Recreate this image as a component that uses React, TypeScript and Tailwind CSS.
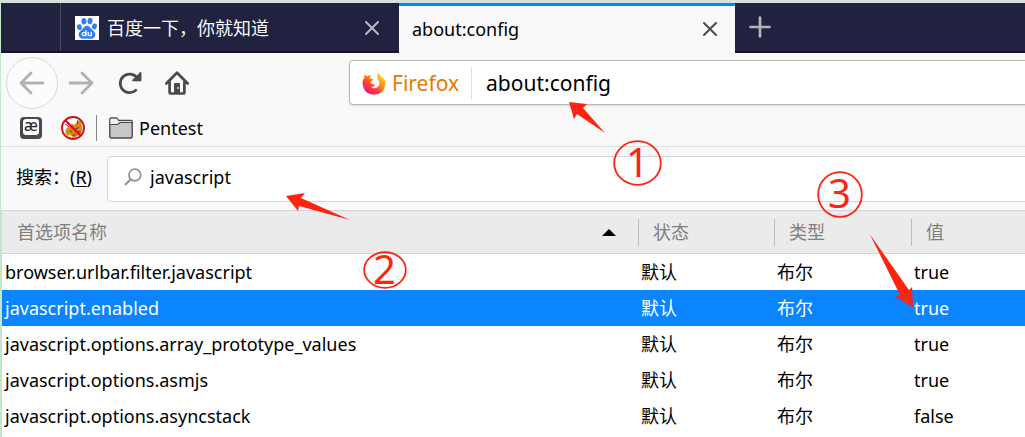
import { useState } from "react";

type Pref = { name: string; status: string; type: string; value: string };

const prefs: Pref[] = [
  { name: "browser.urlbar.filter.javascript", status: "默认", type: "布尔", value: "true" },
  { name: "javascript.enabled", status: "默认", type: "布尔", value: "true" },
  { name: "javascript.options.array_prototype_values", status: "默认", type: "布尔", value: "true" },
  { name: "javascript.options.asmjs", status: "默认", type: "布尔", value: "true" },
  { name: "javascript.options.asyncstack", status: "默认", type: "布尔", value: "false" },
];

function CloseIcon() {
  return (
    <svg viewBox="0 0 16 16" className="size-4" fill="none" stroke="currentColor" strokeWidth="2" strokeLinecap="round" aria-hidden="true">
      <path d="M2 2l12 12M14 2L2 14" />
    </svg>
  );
}

function BaiduIcon() {
  return (
    <svg viewBox="0 0 24 24" className="size-6 shrink-0" aria-hidden="true">
      <rect width="24" height="24" fill="#fff" />
      <g fill="#2d7ff5">
        <ellipse cx="4.4" cy="11.200" rx="2.400" ry="2.900" transform="rotate(-12 4.4 11.200)" />
        <ellipse cx="8.900" cy="5.200" rx="2.500" ry="3.200" />
        <ellipse cx="15" cy="5" rx="2.500" ry="3.200" transform="rotate(10 15 5)" />
        <ellipse cx="19.400" cy="10.400" rx="2.500" ry="3" transform="rotate(10 19.400 10.400)" />
        <path d="M12 9.800c2.200 0 3 1.600 4.200 3 1.400 1.500 4.100 2.900 4.100 5.800 0 2.600-1.800 4.200-4.300 4.200-1.500 0-2.700-.3-4-.3s-2.500.3-4 .3c-2.500 0-4.300-1.600-4.300-4.200 0-2.900 2.700-4.300 4.100-5.800 1.200-1.400 2-3 4.200-3z" />
      </g>
      <g fill="none" stroke="#fff" strokeWidth="1.300">
        <circle cx="9" cy="18" r="1.700" />
        <path d="M10.900 14.200v6.100M13.200 16.100v2.400q0 1.200 1.300 1.200h1.800v-3.600" />
      </g>
    </svg>
  );
}

function FirefoxIcon() {
  return (
    <svg viewBox="0 0 24 24" className="size-6 shrink-0" aria-hidden="true">
      <defs>
        <linearGradient id="fx-body" x1="0.85" y1="0.1" x2="0.2" y2="0.95">
          <stop offset="0" stopColor="#ffe226" />
          <stop offset="0.35" stopColor="#ff980e" />
          <stop offset="0.65" stopColor="#ff4036" />
          <stop offset="1" stopColor="#e3128b" />
        </linearGradient>
      </defs>
      <path
        fill="url(#fx-body)"
        d="M2.700 3.200Q3.700 4.800 5 5.200 7 4 9.400 4.300 8.200 5.400 8.100 7 9 8 10.800 8.100 11.600 8.400 10.800 9.300L8.800 10.800Q9 12 8.400 12.900 10 12.100 11.200 13.200 12.600 14 13.500 13.300 12 16.600 9 15.800 12 18.700 15.500 16.200 18.600 13.600 16.800 9.800 15.400 8 15.100 5.600 15.100 2.700 16.800 1.200 16.900 3.500 19 5 20.800 6 21.500 8 21.800 7.500 21.700 6.700 23.800 10 23.400 13.500 21.800 23.500 12 23.800 2.200 23.500.6 13.600.300 9 2.500 6.200 2 4.700 2.700 3.200Z"
      />
    </svg>
  );
}

function BackIcon() {
  return (
    <svg viewBox="0 0 26 24" className="h-6 w-[26px]" fill="none" stroke="currentColor" strokeWidth="2.800" strokeLinecap="round" strokeLinejoin="round" aria-hidden="true">
      <path d="M24 12H2M12 2L2 12l10 10" />
    </svg>
  );
}

function ForwardIcon() {
  return (
    <svg viewBox="0 0 26 24" className="h-6 w-[26px]" fill="none" stroke="currentColor" strokeWidth="2.800" strokeLinecap="round" strokeLinejoin="round" aria-hidden="true">
      <path d="M2 12h22M14 2l10 10-10 10" />
    </svg>
  );
}

function ReloadIcon() {
  return (
    <svg viewBox="0 0 24 24" className="size-6" fill="none" stroke="currentColor" strokeWidth="2.800" strokeLinecap="round" aria-hidden="true">
      <path d="M17.800 19.300A9.300 9.300 0 1 1 19 6.800" />
      <path d="M22.600 1.800v7.800h-7.800z" fill="currentColor" strokeWidth="1" strokeLinejoin="round" />
      <path d="M22.200 2.500v6.500h-6.500" strokeWidth="2.400" strokeLinejoin="round" />
    </svg>
  );
}

function HomeIcon() {
  return (
    <svg viewBox="0 0 24 24" className="size-6" aria-hidden="true">
      <path d="M1.300 12.500L12 1.800l10.700 10.700M4.600 11v10q0 1.500 1.500 1.500h11.800q1.500 0 1.500-1.500V11" fill="none" stroke="currentColor" strokeWidth="2.700" strokeLinecap="round" strokeLinejoin="round" />
      <path d="M9 22v-9q0-1 1-1h4q1 0 1 1v9z" fill="currentColor" />
      <circle cx="13" cy="17" r="1" fill="#ddd" />
    </svg>
  );
}

function NoFoxIcon() {
  return (
    <svg viewBox="0 0 24 24" className="size-6" aria-hidden="true">
      <circle cx="12" cy="12" r="11" fill="#fff" />
      <path d="M4.500 14Q6 10.500 10 9l1-1.500 2 1.500 5-4.500 2 1 1.500 8-2 5-7 3.500Q5.500 21.500 4.500 17z" fill="#e38710" />
      <path d="M7.500 18q2 2.500 5 1.500l-2 3-3-2z" fill="#fff2dc" />
      <path d="M4 8l4 2.500M17 4l-1 4M8.500 15l3 1M14 13l4-1.500M17 15l3 1.500M11 20l4-2" stroke="#493728" strokeWidth="0.900" />
      <circle cx="12" cy="12" r="11" fill="none" stroke="#d20b19" strokeWidth="1.800" />
      <path d="M4.300 4.300l15.400 15.400" stroke="#d20b19" strokeWidth="2" />
    </svg>
  );
}

function FolderIcon() {
  return (
    <svg viewBox="0 0 24 22" className="h-[22px] w-6" stroke="#4a4a4a" strokeLinejoin="round" aria-hidden="true">
      <path d="M.8 19.500V2.500Q.8 1 2.300 1H7q1 0 1.600 1l1 1.500H22q1.200 0 1.200 1.200v14.800q0 1.500-1.500 1.500H2.300Q.8 21 .8 19.500z" fill="#c8c8c8" strokeWidth="1.400" />
      <path d="M1.400 7h7l2.500-2H22.600V4.200H9.300L8 1.700H2.300Q1.400 1.700 1.400 2.500z" fill="#eee" stroke="none" />
      <path d="M1 7.500h7q1 0 1.700-.8T11.500 5.500H23" fill="none" strokeWidth="1.200" />
    </svg>
  );
}

function SearchIcon() {
  return (
    <svg viewBox="0 0 18 18" className="size-[18px] shrink-0" fill="none" stroke="#929292" strokeWidth="1.700" aria-hidden="true">
      <circle cx="10.800" cy="7" r="5.900" />
      <path d="M6.500 11.500L1 17" strokeWidth="2" />
    </svg>
  );
}

function Annotations() {
  return (
    <div className="pointer-events-none absolute inset-0 overflow-hidden text-[40px] leading-10 text-[#ff2412]">
      <svg className="absolute top-0 left-0 h-[437px] w-[1025px]" viewBox="0 0 1025 437" aria-hidden="true">
        <g fill="#ff2412">
          <path d="M569 102L587 104 583 108 605 133 577 114 574 119Z" />
          <path d="M286 196L305 193 301 198 350 220 299 206 298 211Z" />
          <path d="M870 234.500L909 290 912 287 913 307.500 895 296 900 295Z" />
        </g>
        <g fill="none" stroke="#ff2412" strokeWidth="1.800">
          <ellipse cx="637.500" cy="163" rx="23.300" ry="21.800" />
          <ellipse cx="385" cy="270" rx="20.800" ry="17.800" />
          <ellipse cx="840" cy="194.500" rx="21.800" ry="22.300" />
        </g>
      </svg>
      <span className="absolute top-[142px] left-[626px]">1</span>
      <span className="absolute top-[249px] left-[373px]">2</span>
      <span className="absolute top-[173px] left-[828px]">3</span>
    </div>
  );
}

export default function App() {
  const [query, setQuery] = useState("javascript");
  const [address, setAddress] = useState("about:config");
  const [selected, setSelected] = useState("javascript.enabled");

  return (
    <div className="relative flex min-h-screen flex-col overflow-hidden bg-[#dedede] pt-0.5 font-['Noto_Sans','Noto_Sans_CJK_SC',sans-serif] text-lg leading-6 text-black">
      <div className="flex grow flex-col border-t border-l border-[#c6e6cd] bg-[#f9f9fa]">
        <header>
          <div className="flex h-[50px] border-b-2 border-[#13142c] bg-[#20223f]">
            <div className="w-[59px] shrink-0" />
            <div className="flex w-[339px] shrink-0 items-center border-l border-[#4b4c64] pt-0.5 pr-[15px] pl-3.5 text-[#f9f9fa]">
              <BaiduIcon />
              <span className="ml-2 grow">百度一下，你就知道</span>
              <button type="button" aria-label="关闭标签页" className="p-1 text-[#bcbcc6]"><CloseIcon /></button>
            </div>
            <div className="-mb-0.5 flex w-[336px] shrink-0 items-center border-t-3 border-[#0a84ff] bg-[#f9f9fa] pr-[13px] pb-0.5 pl-[13px]">
              <span className="grow">about:config</span>
              <button type="button" aria-label="关闭标签页" className="p-1 text-[#4a4a4f]"><CloseIcon /></button>
            </div>
            <button type="button" aria-label="新建标签页" className="ml-3.5 text-[#b5b5c0]">
              <svg viewBox="0 0 22 22" className="size-[22px]" stroke="currentColor" strokeWidth="2.700" strokeLinecap="round" aria-hidden="true">
                <path d="M11 1.500v19M1.500 11h19" />
              </svg>
            </button>
          </div>

          <nav className="flex h-[59px] items-center pl-[5px] text-[#4a4a4a]">
            <button type="button" aria-label="后退" className="flex size-[52px] items-center justify-center rounded-full border border-[#d8d8d8] bg-[#fcfcfc] text-[#b1b1b1]"><BackIcon /></button>
            <button type="button" aria-label="前进" className="ml-2.5 text-[#b1b1b1]"><ForwardIcon /></button>
            <button type="button" aria-label="刷新" className="ml-6"><ReloadIcon /></button>
            <button type="button" aria-label="主页" className="ml-[23px]"><HomeIcon /></button>
            <div className="-mr-1 ml-40 flex h-[45px] grow items-center rounded border border-[#b9b9b9] bg-white pl-3 leading-8 shadow-sm">
              <FirefoxIcon />
              <span className="ml-1.5 text-[21px] text-[#e37b00]">Firefox</span>
              <span className="ml-3 h-8 border-l border-[#dddddd]" />
              <input aria-label="地址" value={address} onChange={(e) => setAddress(e.target.value)} className="ml-3.5 min-w-0 grow bg-transparent text-[21px] text-black outline-none" />
            </div>
          </nav>

          <div className="flex h-[35px] items-center border-b border-[#dfdfdf] pb-0.5 pl-[19px]">
            <button type="button" className="flex size-[22px] items-start justify-center rounded-sm bg-[#4a4a4a] pt-0.5 text-[#222]">
              <span className="flex h-4 w-4 items-center justify-center rounded-[3px] bg-[#fafafa] text-base leading-5">
                <span className="pb-1">æ</span>
              </span>
            </button>
            <button type="button" aria-label="禁用" className="ml-[19px]"><NoFoxIcon /></button>
            <span className="ml-[11px] mr-3 h-[26px] border-l border-[#858585]" />
            <button type="button" className="flex items-center gap-1.5"><FolderIcon />Pentest</button>
          </div>
        </header>

        <main className="flex grow flex-col">
          <div className="flex h-[63px] items-center pl-[15px]">
            <label htmlFor="pref-search" className="w-[91px] shrink-0 pb-1">搜索：(<u className="underline-offset-2">R</u>)</label>
            <div className="-mr-1 flex h-[46px] grow items-center rounded border border-[#d4d4d7] bg-white pb-1 pl-4 leading-8">
              <SearchIcon />
              <input id="pref-search" value={query} onChange={(e) => setQuery(e.target.value)} className="ml-2 min-w-0 grow bg-transparent outline-none" />
            </div>
          </div>

          <div className="grow border-l border-[#d7d7db] bg-white">
            <table className="w-full table-fixed border-separate border-spacing-0 text-left">
              <colgroup>
                <col className="w-[636px]" />
                <col className="w-[136px]" />
                <col className="w-[137px]" />
                <col />
              </colgroup>
              <thead>
                <tr className="h-11 bg-[#ebebeb] text-[#808080]">
                  <th className="border-y border-[#d4d4d7] p-0 font-normal">
                    <span className="flex items-center justify-between pr-[22px] pl-[15px]">
                      首选项名称
                      <svg viewBox="0 0 14 7" className="h-[7px] w-3.5" aria-hidden="true"><path d="M0 7L7 0l7 7z" fill="#000" /></svg>
                    </span>
                  </th>
                  {["状态", "类型", "值"].map((h) => (
                    <th key={h} className="border-y border-[#d4d4d7] p-0 font-normal"><span className="flex h-[27px] items-center border-l border-[#bdbdbd] pl-3.5">{h}</span></th>
                  ))}
                </tr>
              </thead>
              <tbody>
                {prefs.map((p) => (
                  <tr key={p.name} onClick={() => setSelected(p.name)} className={p.name === selected ? "h-9 bg-[#0a84ff] text-white" : "h-9"}>
                    <td className="p-0 pl-[3px]">{p.name}</td>
                    <td className="p-0 pl-[3px]">{p.status}</td>
                    <td className="p-0 pl-[3px]">{p.type}</td>
                    <td className="p-0 pl-[3px]">{p.value}</td>
                  </tr>
                ))}
              </tbody>
            </table>
          </div>
        </main>
      </div>
      <Annotations />
    </div>
  );
}
